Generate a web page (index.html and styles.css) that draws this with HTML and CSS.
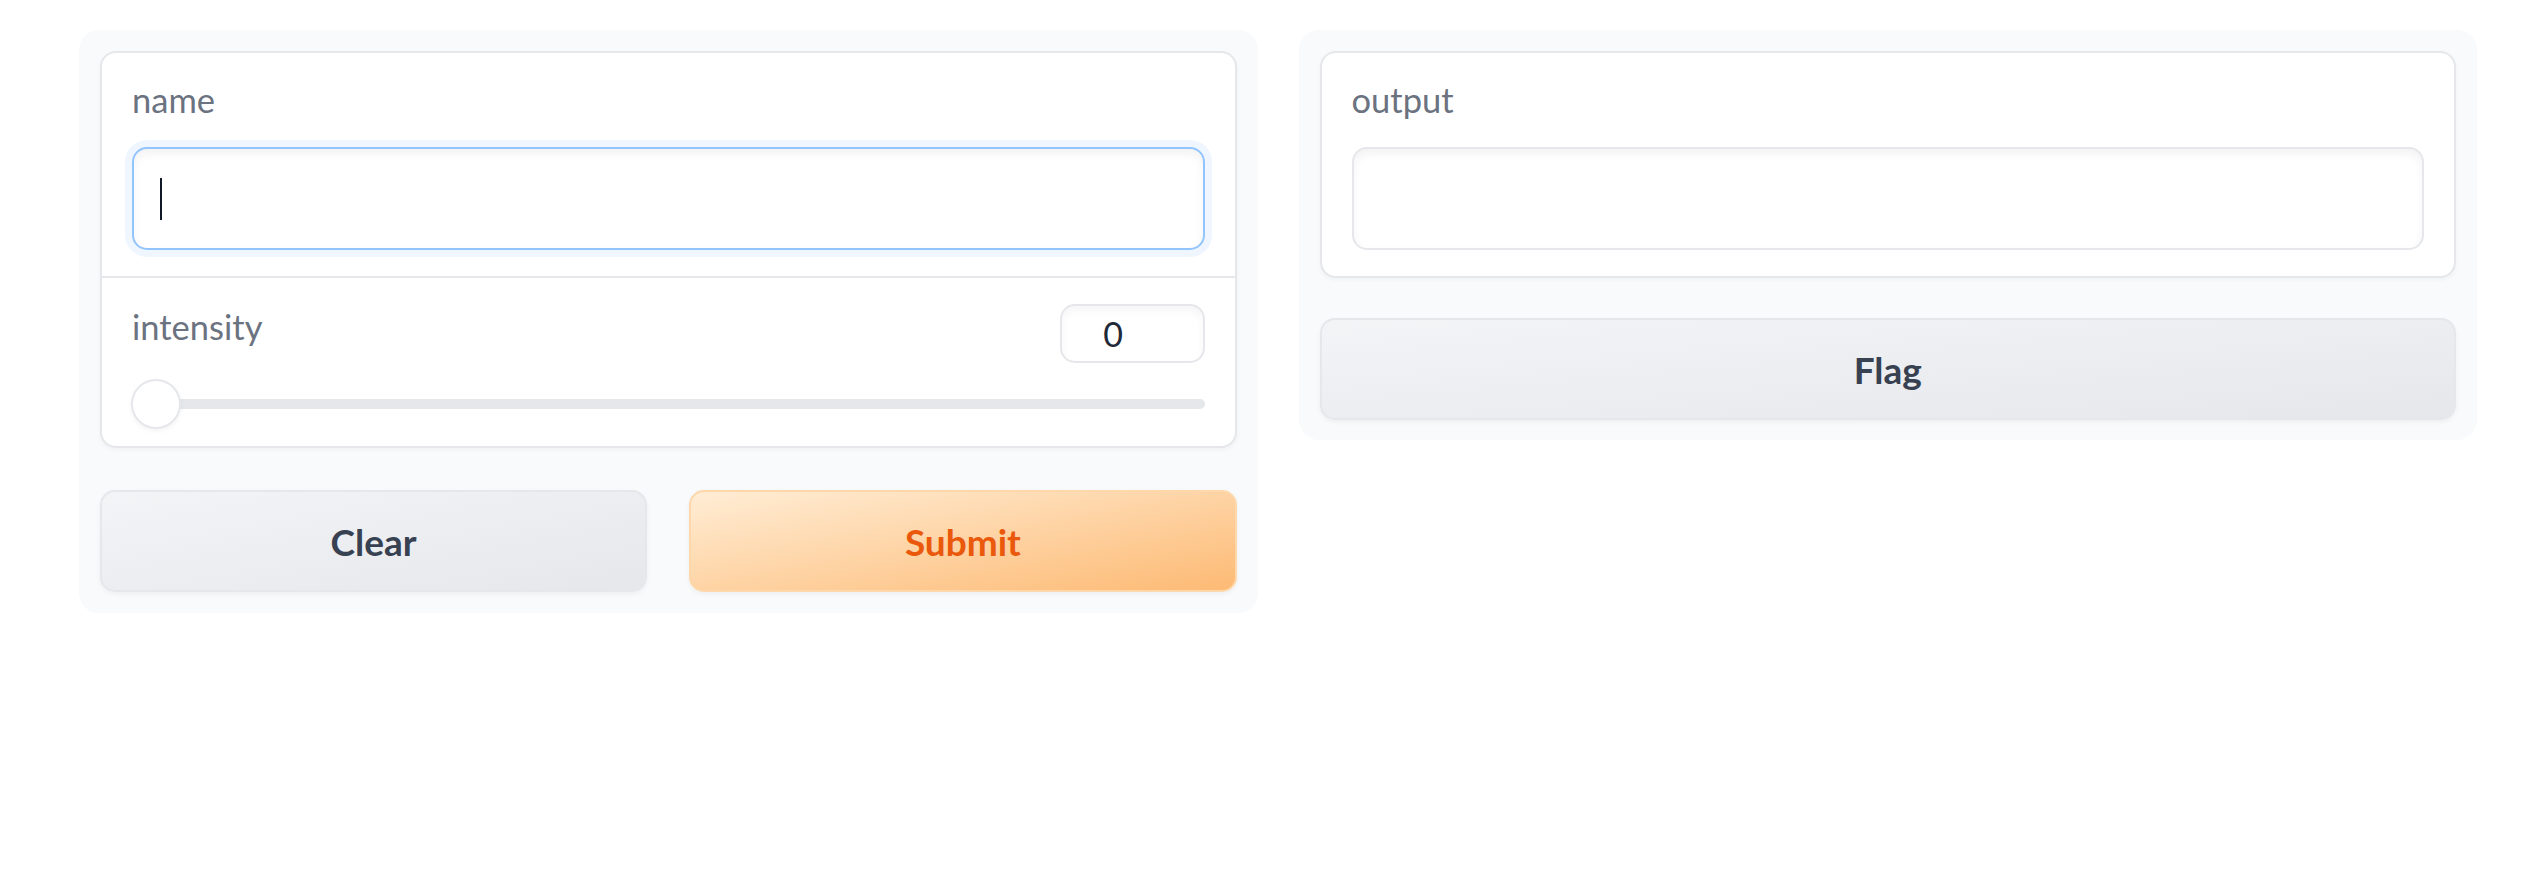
FILE: index.html
```html
<!DOCTYPE html>
<html lang="en">
<head>
<meta charset="utf-8">
<title>Interface</title>
<link rel="stylesheet" href="styles.css">
</head>
<body>
<div class="app">
  <div class="panel">
    <div class="form">
      <div class="block">
        <div class="label">name</div>
        <div class="textbox focused"><span class="caret"></span></div>
      </div>
      <div class="block slider-block">
        <div class="slider-head">
          <div class="label">intensity</div>
          <div class="number">0</div>
        </div>
        <div class="slider">
          <div class="track"></div>
          <div class="thumb"></div>
        </div>
      </div>
    </div>
    <div class="btn-row">
      <button class="btn secondary">Clear</button>
      <button class="btn primary">Submit</button>
    </div>
  </div>
  <div class="panel panel-output">
    <div class="form">
      <div class="block">
        <div class="label">output</div>
        <div class="textbox"></div>
      </div>
    </div>
    <button class="btn secondary">Flag</button>
  </div>
</div>
</body>
</html>
```

FILE: styles.css
```css
html, body {
  margin: 0;
  padding: 0;
  background: #ffffff;
}

body {
  font-family: "Lato", "Open Sans", "Noto Sans", sans-serif;
  color: #1f2937;
}

.app {
  display: flex;
  align-items: flex-start;
  gap: 41px;
  width: 2398px;
  padding: 30px 0 0 79px;
}

.panel {
  flex: 1 1 0;
  display: flex;
  flex-direction: column;
  gap: 42px;
  padding: 21px;
  background: #f9fafb;
  border-radius: 20px;
}

.panel-output {
  gap: 40px;
  padding-bottom: 20px;
}

.form {
  display: flex;
  flex-direction: column;
  gap: 2px;
  background: #e5e7eb;
  border: 2px solid #e5e7eb;
  border-radius: 16px;
  overflow: hidden;
  box-shadow: 0 2px 5px rgba(0, 0, 0, 0.04);
}

.block {
  background: #ffffff;
  padding: 24px 30px 26px 30px;
  display: flex;
  flex-direction: column;
  gap: 24px;
}

.label {
  font-size: 34.5px;
  line-height: 46px;
  color: #6b7280;
}

.textbox {
  height: 99px;
  border: 2px solid #e5e7eb;
  border-radius: 15px;
  background: #ffffff;
  box-shadow: inset 0 5px 10px rgba(0, 0, 0, 0.05);
  display: flex;
  align-items: center;
  padding: 0 26px;
}

.textbox.focused {
  border-color: #93c5fd;
  box-shadow: 0 0 0 7px #eff6ff, inset 0 5px 10px rgba(0, 0, 0, 0.05);
}

.caret {
  width: 2px;
  height: 42px;
  background: #111827;
}

.slider-block {
  padding: 26px 30px 17px 30px;
  gap: 16px;
}

.slider-head {
  display: flex;
  justify-content: space-between;
  align-items: flex-start;
}

.number {
  box-sizing: border-box;
  width: 145px;
  height: 59px;
  border: 2px solid #e5e7eb;
  border-radius: 15px;
  box-shadow: inset 0 5px 10px rgba(0, 0, 0, 0.04);
  font-family: "Lato", "Open Sans", sans-serif;
  font-size: 34px;
  line-height: 55px;
  color: #1f2937;
  text-align: center;
  padding-right: 38px;
  padding-left: 0;
}

.slider {
  position: relative;
  height: 50px;
  display: flex;
  align-items: center;
}

.track {
  flex: 1 1 auto;
  height: 10px;
  border-radius: 5px;
  background: #e5e7eb;
}

.thumb {
  position: absolute;
  left: -1px;
  top: 0;
  width: 46px;
  height: 46px;
  border-radius: 50%;
  background: #ffffff;
  border: 2px solid #e5e7eb;
  box-shadow: 0 2px 5px rgba(0, 0, 0, 0.05);
}

.btn-row {
  display: flex;
  gap: 42px;
}

.btn {
  flex: none;
  height: 102px;
  border-radius: 15px;
  border: 2px solid #e5e7eb;
  font-family: "Lato", "Open Sans", sans-serif;
  font-weight: 700;
  font-size: 37px;
  cursor: pointer;
  box-shadow: 0 2px 5px rgba(0, 0, 0, 0.05);
  padding: 0;
}

.btn-row .btn {
  flex: 1 1 0;
}

.btn.secondary {
  background: linear-gradient(to bottom right, #f3f4f6, #e5e7eb);
  color: #374151;
}

.btn.primary {
  background: linear-gradient(to bottom right, #ffedd5, #fdba74);
  border-color: #fed7aa;
  color: #ea580c;
}
```
